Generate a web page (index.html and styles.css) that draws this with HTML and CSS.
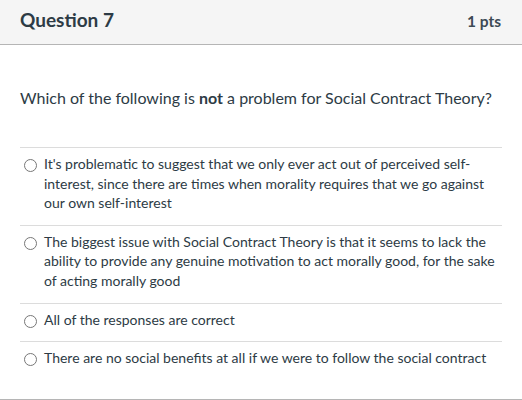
FILE: index.html
```html
<!DOCTYPE html>
<html>
<head>
<meta charset="utf-8">
<link rel="stylesheet" href="styles.css">
</head>
<body>
<div class="question">
  <div class="header">
    <span class="title">Question 7</span>
    <span class="pts">1 pts</span>
  </div>
  <div class="body">
    <p class="text">Which of the following is <strong>not</strong> a problem for Social Contract Theory?</p>
    <div class="answers">
      <label class="answer"><span class="radio"></span><span class="answer-text">It's problematic to suggest that we only ever act out of perceived self-interest, since there are times when morality requires that we go against our own self-interest</span></label>
      <label class="answer"><span class="radio"></span><span class="answer-text">The biggest issue with Social Contract Theory is that it seems to lack the ability to provide any genuine motivation to act morally good, for the sake of acting morally good</span></label>
      <label class="answer"><span class="radio"></span><span class="answer-text">All of the responses are correct</span></label>
      <label class="answer"><span class="radio"></span><span class="answer-text">There are no social benefits at all if we were to follow the social contract</span></label>
    </div>
  </div>
</div>
</body>
</html>
```
FILE: styles.css
```css
html, body {
  margin: 0;
  padding: 0;
  background: #ffffff;
}
body {
  font-family: Lato, "Open Sans", sans-serif;
  color: #2d3b45;
}
.question {
  width: 522px;
  height: 400px;
  box-sizing: border-box;
  border-bottom: 1px solid #b5b5b5;
}
.header {
  height: 45px;
  box-sizing: border-box;
  background: #f5f5f5;
  border-bottom: 1px solid #b5b5b5;
  padding: 10px 21px 0 20px;
  display: flex;
  justify-content: space-between;
  align-items: baseline;
}
.title {
  font-size: 19px;
  font-weight: 700;
  line-height: 19px;
}
.pts {
  font-size: 15.5px;
  font-weight: 700;
  line-height: 15px;
  color: #3d4a54;
}
.body {
  padding: 0 20px;
}
.text {
  margin: 41px 0 37px;
  font-size: 16px;
  line-height: 24px;
}
.text strong {
  font-weight: 700;
}
.answer {
  display: flex;
  align-items: flex-start;
  gap: 7px;
  border-top: 1px solid #dcdcdc;
  padding: 6px 4px 12px 4px;
  font-size: 14px;
  line-height: 19.6px;
}
.radio {
  flex: none;
  width: 13px;
  height: 13px;
  box-sizing: border-box;
  border: 1px solid #777;
  border-radius: 50%;
  margin-top: 5px;
  background: #fff;
}
```
